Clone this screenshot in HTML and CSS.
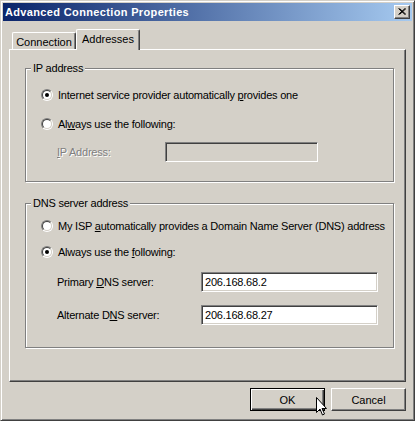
FILE: index.html
```html
<!DOCTYPE html>
<html>
<head>
<meta charset="utf-8">
<title>Advanced Connection Properties</title>
<link rel="stylesheet" href="styles.css">
</head>
<body>
<div class="window">
  <div class="titlebar">
    <span class="title">Advanced Connection Properties</span>
    <span class="close"><svg width="8" height="7" viewBox="0 0 8 7"><path d="M0.5 0.5 L7 6.5 M1.5 0.5 L8 6.5 M7 0.5 L0.5 6.5 M8 0.5 L1.5 6.5" stroke="#000" stroke-width="1" fill="none"/></svg></span>
  </div>
  <div class="body">
    <div class="tabs">
      <div class="tab">Connection</div>
      <div class="tab selected">Addresses</div>
    </div>
    <div class="panel">
      <div class="group group-ip">
        <span class="legend">IP address</span>
        <div class="row r-ip1"><span class="radio checked"><span class="radio-in"></span></span><span class="lbl">Internet service provider automatically <u>p</u>rovides one</span></div>
        <div class="row r-ip2"><span class="radio"><span class="radio-in"></span></span><span class="lbl">Al<u>w</u>ays use the following:</span></div>
        <div class="field r-ip3"><span class="flabel fl-ip disabled"><u>I</u>P Address:</span><span class="input input-ip disabled-input"></span></div>
      </div>
      <div class="group group-dns">
        <span class="legend">DNS server address</span>
        <div class="row r-dns1"><span class="radio"><span class="radio-in"></span></span><span class="lbl">My ISP <u>a</u>utomatically provides a Domain Name Server (DNS) address</span></div>
        <div class="row r-dns2"><span class="radio checked"><span class="radio-in"></span></span><span class="lbl">Always use the <u>f</u>ollowing:</span></div>
        <div class="field r-dns3"><span class="flabel fl-dns">Primary <u>D</u>NS server:</span><span class="input input-dns">206.168.68.2</span></div>
        <div class="field r-dns4"><span class="flabel fl-dns">Alternate D<u>N</u>S server:</span><span class="input input-dns">206.168.68.27</span></div>
      </div>
    </div>
    <div class="footer">
      <button class="btn default">OK</button>
      <button class="btn">Cancel</button>
    </div>
  </div>
  <svg class="cursor" width="12" height="19" viewBox="0 0 12 19"><path d="M0.5 0.5 L0.5 15.5 L4 12 L6.5 18 L8.5 17 L6 11.5 L10.5 11.5 Z" fill="#fff" stroke="#000" stroke-width="1"/></svg>
</div>
</body>
</html>
```
FILE: styles.css
```css
* { box-sizing: border-box; }
html, body { margin: 0; padding: 0; background: #d4d0c8; }
body {
  font-family: "Liberation Sans", Arial, sans-serif;
  font-size: 11px;
  letter-spacing: -0.22px;
  color: #000;
}
.window {
  position: relative;
  width: 415px;
  height: 421px;
  border: 1px solid;
  border-color: #d4d0c8 #404040 #404040 #d4d0c8;
  box-shadow: inset 1px 1px #fff, inset -1px -1px #808080;
  padding: 2px;
  background: #d4d0c8;
  display: flex;
  flex-direction: column;
}
.titlebar {
  height: 18px;
  flex: none;
  background: linear-gradient(to right, #0a246a, #a6caf0);
  display: flex;
  align-items: center;
  justify-content: space-between;
  padding: 0 2px 0 2px;
}
.title {
  color: #fff;
  font-weight: bold;
  font-size: 11px;
  letter-spacing: 0.35px;
}
.close {
  width: 16px;
  height: 14px;
  background: #d4d0c8;
  border: 1px solid;
  border-color: #fff #404040 #404040 #fff;
  box-shadow: inset -1px -1px #808080;
  display: flex;
  align-items: center;
  justify-content: center;
  padding: 0 1px 1px 0;
}
.close svg { display: block; }
.body {
  flex: 1;
  display: flex;
  flex-direction: column;
  padding: 0 6px;
}
.tabs {
  height: 20px;
  margin-top: 8px;
  display: flex;
  align-items: flex-end;
  padding-left: 3px;
  flex: none;
}
.tab {
  height: 17px;
  width: 64px;
  border: 1px solid;
  border-bottom: none;
  border-color: #fff #404040 #fff #fff;
  border-top-left-radius: 2px;
  border-top-right-radius: 2px;
  box-shadow: inset -1px 0 #808080;
  display: flex;
  align-items: center;
  justify-content: center;
  padding-top: 1px;
  background: #d4d0c8;
  letter-spacing: 0;
}
.tab.selected {
  position: relative;
  z-index: 1;
  height: 21px;
  width: 64px;
  margin-bottom: -1px;
  padding-bottom: 4px;
}
.panel {
  height: 333px;
  flex: none;
  border: 1px solid;
  border-color: #fff #404040 #404040 #fff;
  box-shadow: inset -1px -1px #808080;
  padding: 18px 11px 0 15px;
}
.group {
  border: 1px solid #808080;
  box-shadow: inset 1px 1px #fff, 1px 1px #fff;
  padding-left: 15px;
  display: flex;
  flex-direction: column;
  align-items: flex-start;
}
.group-ip { height: 114px; }
.group-dns { height: 145px; margin-top: 21px; }
.legend {
  display: block;
  height: 13px;
  line-height: 13px;
  margin: -7px 0 0 -10px;
  padding: 0 2px;
  background: #d4d0c8;
}
.row {
  display: flex;
  align-items: center;
  height: 16px;
}
.r-ip1 { margin-top: 12px; }
.r-ip2 { margin-top: 13px; }
.r-dns1 { margin-top: 8px; }
.r-dns2 { margin-top: 10px; }
.radio {
  width: 12px;
  height: 12px;
  border-radius: 50%;
  border: 1px solid;
  border-color: #808080 #fff #fff #808080;
  margin-right: 5px;
  flex: none;
}
.radio-in {
  display: flex;
  align-items: center;
  justify-content: center;
  width: 10px;
  height: 10px;
  border-radius: 50%;
  border: 1px solid;
  border-color: #404040 #d4d0c8 #d4d0c8 #404040;
  background: #fff;
}
.radio.checked .radio-in::after {
  content: "";
  width: 4px;
  height: 4px;
  border-radius: 50%;
  background: #000;
}
.lbl { white-space: nowrap; }
.field {
  display: flex;
  align-items: center;
  height: 20px;
  padding-left: 16px;
}
.r-ip3 { margin-top: 10px; }
.r-dns3 { margin-top: 12px; }
.r-dns4 { margin-top: 13px; }
.flabel { white-space: nowrap; }
.fl-ip { width: 108px; }
.fl-dns { width: 144px; }
.disabled {
  color: #808080;
  text-shadow: 1px 1px #fff;
}
.input {
  height: 20px;
  border: 1px solid;
  border-color: #808080 #fff #fff #808080;
  box-shadow: inset 1px 1px #404040, inset -1px -1px #d4d0c8;
  background: #fff;
  display: flex;
  align-items: center;
  padding: 0 3px;
}
.input-ip { width: 153px; }
.input-dns { width: 177px; }
.disabled-input { background: #d4d0c8; }
.footer {
  flex: 1;
  display: flex;
  justify-content: flex-end;
  align-items: flex-start;
  padding-top: 6px;
  gap: 6px;
}
.btn {
  width: 75px;
  height: 23px;
  font-family: "Liberation Sans", Arial, sans-serif;
  font-size: 11px;
  color: #000;
  background: #d4d0c8;
  border: 1px solid;
  border-color: #fff #404040 #404040 #fff;
  box-shadow: inset -1px -1px #808080;
  padding: 0;
  margin: 0;
  border-radius: 0;
}
.btn.default {
  border-color: #000;
  box-shadow: inset 1px 1px #fff, inset -1px -1px #404040, inset -2px -2px #808080;
}
.cursor {
  position: absolute;
  left: 315px;
  top: 396px;
}
```
